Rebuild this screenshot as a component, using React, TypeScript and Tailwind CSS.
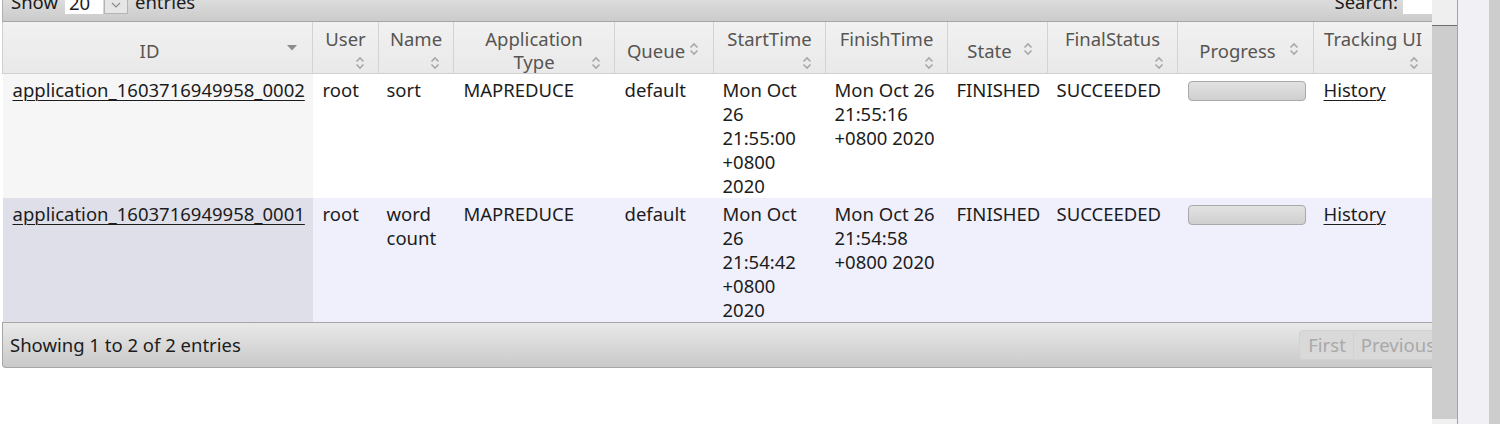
import React from "react";

type Col = {
  key: string;
  label: string[];
  width: number;
  icon: "sorted" | "center" | "bottom";
};

const columns: Col[] = [
  { key: "id", label: ["ID"], width: 310, icon: "sorted" },
  { key: "user", label: ["User"], width: 66, icon: "bottom" },
  { key: "name", label: ["Name"], width: 75, icon: "bottom" },
  { key: "type", label: ["Application", "Type"], width: 161, icon: "bottom" },
  { key: "queue", label: ["Queue"], width: 99, icon: "center" },
  { key: "start", label: ["StartTime"], width: 112, icon: "bottom" },
  { key: "finish", label: ["FinishTime"], width: 122, icon: "bottom" },
  { key: "state", label: ["State"], width: 100, icon: "center" },
  { key: "final", label: ["FinalStatus"], width: 130, icon: "bottom" },
  { key: "progress", label: ["Progress"], width: 136, icon: "center" },
  { key: "tracking", label: ["Tracking UI"], width: 119, icon: "bottom" },
];

const tableWidth = columns.reduce((s, c) => s + c.width, 0);

type App = {
  id: string;
  user: string;
  name: string[];
  type: string;
  queue: string;
  start: string[];
  finish: string[];
  state: string;
  final: string;
};

const apps: App[] = [
  {
    id: "application_1603716949958_0002",
    user: "root",
    name: ["sort"],
    type: "MAPREDUCE",
    queue: "default",
    start: ["Mon Oct", "26", "21:55:00", "+0800", "2020"],
    finish: ["Mon Oct 26", "21:55:16", "+0800 2020"],
    state: "FINISHED",
    final: "SUCCEEDED",
  },
  {
    id: "application_1603716949958_0001",
    user: "root",
    name: ["word", "count"],
    type: "MAPREDUCE",
    queue: "default",
    start: ["Mon Oct", "26", "21:54:42", "+0800", "2020"],
    finish: ["Mon Oct 26", "21:54:58", "+0800 2020"],
    state: "FINISHED",
    final: "SUCCEEDED",
  },
];

function SortIcon() {
  return (
    <svg width="10" height="14" viewBox="0 0 10 14" className="block">
      <polyline points="1.5,5.5 5,2 8.5,5.5" fill="none" stroke="#a8a8a8" strokeWidth="1.6" />
      <polyline points="1.5,8.5 5,12 8.5,8.5" fill="none" stroke="#a8a8a8" strokeWidth="1.6" />
    </svg>
  );
}

function SortedIcon() {
  return (
    <svg width="10" height="6" viewBox="0 0 10 6" className="block">
      <polygon points="0,0 10,0 5,5.5" fill="#8c8c8c" />
    </svg>
  );
}

function Lines({ lines }: { lines: string[] }) {
  return (
    <>
      {lines.map((l, i) => (
        <div key={i} className="whitespace-nowrap">
          {l}
        </div>
      ))}
    </>
  );
}

function HeaderCell({ col }: { col: Col }) {
  const layout =
    col.icon === "bottom" ? "pr-[10px] align-top pt-[5px]" : "pr-[26px] align-middle pt-[5px]";
  return (
    <th
      className={`relative border-r border-[#d3d3d3] pl-[10px] ${layout} text-center font-normal text-[#575552] leading-[23px]`}
    >
      {col.label.map((l, i) => (
        <div key={i} className="whitespace-nowrap">
          {l}
        </div>
      ))}
      {col.icon === "sorted" && (
        <span className="absolute right-[15px] top-[23px]">
          <SortedIcon />
        </span>
      )}
      {col.icon === "center" && (
        <span className="absolute right-[14px] top-[20px]">
          <SortIcon />
        </span>
      )}
      {col.icon === "bottom" && (
        <span className="absolute right-[13px] top-[34px]">
          <SortIcon />
        </span>
      )}
    </th>
  );
}

function ProgressBar() {
  return (
    <div className="mt-[3px] h-[20px] w-[118px] rounded-[4px] border border-[#a9a9a9] bg-gradient-to-b from-[#e2e2e2] to-[#cfcfcf]" />
  );
}

export default function App() {
  const font = { fontFamily: '"Noto Sans", "Open Sans", Arial, sans-serif' };
  return (
    <div className="flex h-[424px] w-[1500px] overflow-hidden bg-white" style={font}>
      {/* page content, clipped on the right */}
      <div className="w-[1432px] shrink-0 overflow-hidden pl-[2px] text-[18.5px] text-[#1c1c1c]">
        <div className="w-[1520px]">
          {/* top toolbar (scrolled partly off) */}
          <div className="h-[22px] overflow-hidden border-b border-[#a6a6a6] border-l border-l-[#b0b0b0] bg-gradient-to-b from-[#dcdcdc] to-[#cbcbcb]">
            <div className="-mt-[10px] flex h-[24px] w-[1430px] items-center justify-between pl-[8px] leading-[24px]">
              <div className="flex items-center">
                <span>Show</span>
                <div className="ml-[7px] flex h-[23px] items-start">
                  <div className="h-[23px] w-[38px] bg-white pl-[4px]">20</div>
                  <div className="ml-[1px] flex h-[23px] w-[24px] items-center justify-center border border-[#b4b4b4] bg-[#e6e6e6]">
                    <svg width="10" height="6" viewBox="0 0 10 6" className="mt-[6px]">
                      <polyline points="1,1 5,5 9,1" fill="none" stroke="#8a8a8a" strokeWidth="1.2" />
                    </svg>
                  </div>
                </div>
                <span className="ml-[7px]">entries</span>
              </div>
              <div className="flex items-center">
                <span>Search:</span>
                <div className="ml-[5px] h-[23px] w-[30px] bg-white" />
              </div>
            </div>
          </div>

          {/* table */}
          <table className="table-fixed border-collapse" style={{ width: tableWidth }}>
            <colgroup>
              {columns.map((c) => (
                <col key={c.key} style={{ width: c.width }} />
              ))}
            </colgroup>
            <thead>
              <tr className="h-[51px] border-b border-[#d0d0d0] border-l border-l-[#cfcfcf] bg-gradient-to-b from-[#f1f1f1] to-[#e9e9e9]">
                {columns.map((c) => (
                  <HeaderCell key={c.key} col={c} />
                ))}
              </tr>
            </thead>
            <tbody className="leading-[24px]">
              {apps.map((a, i) => {
                const odd = i % 2 === 1;
                const rowBg = odd ? "bg-[#f0f0fd]" : "bg-white";
                const idBg = odd ? "bg-[#dfdfea]" : "bg-[#f6f6f6]";
                const td = "align-top pt-[4px] px-[10px]";
                return (
                  <tr key={a.id} className={`${rowBg} h-[124px]`}>
                    <td className={`${td} ${idBg}`}>
                      <a className="underline underline-offset-[3px] decoration-[1px] whitespace-nowrap">{a.id}</a>
                    </td>
                    <td className={td}>{a.user}</td>
                    <td className={`${td} pl-[8px]`}>
                      <Lines lines={a.name} />
                    </td>
                    <td className={td}>{a.type}</td>
                    <td className={td}>{a.queue}</td>
                    <td className={`${td} pl-[9px]`}>
                      <Lines lines={a.start} />
                    </td>
                    <td className={`${td} pl-[9px]`}>
                      <Lines lines={a.finish} />
                    </td>
                    <td className={`${td} pl-[9px]`}>{a.state}</td>
                    <td className={`${td} pl-[9px]`}>{a.final}</td>
                    <td className={td}>
                      <ProgressBar />
                    </td>
                    <td className={td}>
                      <a className="underline underline-offset-[3px] decoration-[1px]">History</a>
                    </td>
                  </tr>
                );
              })}
            </tbody>
          </table>

          {/* footer */}
          <div className="flex h-[46px] w-[1480px] items-center justify-between rounded-bl-[4px] border border-r-0 border-[#a6a6a6] bg-gradient-to-b from-[#e9e9e9] to-[#c9c9c9] pl-[7px]">
            <span>Showing 1 to 2 of 2 entries</span>
            <div className="flex h-[30px] items-stretch text-[#a9a9a9]">
              <div className="flex items-center rounded-l-[4px] border border-[#d2d2d2] bg-[#d9d9d9] pl-[8px] pr-[7px]">First</div>
              <div className="flex items-center border border-l-0 border-[#d2d2d2] bg-[#d9d9d9] pl-[7px] pr-[10px]">Previous</div>
              <div className="w-[36px]" />
            </div>
          </div>
        </div>
      </div>

      {/* inner scroll area */}
      <div className="flex w-[26px] shrink-0 flex-col border-r border-[#a3a3a3]">
        <div className="h-[26px] border-b border-[#6f6f6f] bg-[#efefef]" />
        <div className="flex-1 bg-[#cdcdcd]" />
        <div className="h-[5px] bg-[#f0f0f0]" />
      </div>
      <div className="w-[31px] shrink-0 bg-[#f0f0f5]" />
      <div className="flex-1 bg-[#cdcdcd]" />
    </div>
  );
}
